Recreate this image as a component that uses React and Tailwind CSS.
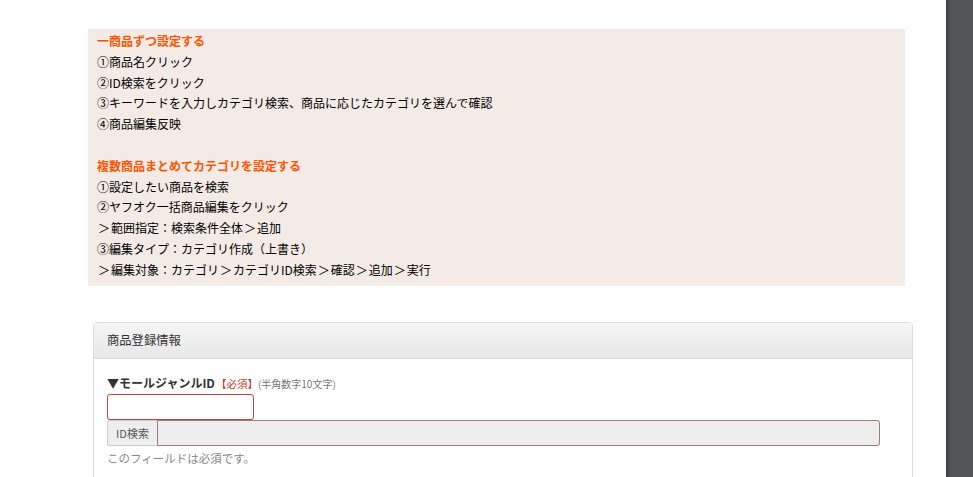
export default function App() {
  const jp = { fontFamily: '"Noto Sans CJK JP", "Noto Sans", sans-serif' };
  const G = () => <span className="inline-block w-[14px] text-center">＞</span>;
  return (
    <div className="flex h-[477px] w-[973px] overflow-hidden bg-white" style={jp}>
      <div className="w-[946px] shrink-0 pt-[29px]">
        <div className="ml-[88px] h-[257px] w-[817px] bg-[#f4ebe6] pl-[9px] pt-[2px] text-[12px] leading-[20.8px] text-[#000]">
          <div className="font-bold text-[#ff5400]">一商品ずつ設定する</div>
          <div>①商品名クリック</div>
          <div>②ID検索をクリック</div>
          <div>③キーワードを入力しカテゴリ検索、商品に応じたカテゴリを選んで確認</div>
          <div>④商品編集反映</div>
          <div>&nbsp;</div>
          <div className="font-bold text-[#ff5400]">複数商品まとめてカテゴリを設定する</div>
          <div>①設定したい商品を検索</div>
          <div>②ヤフオク一括商品編集をクリック</div>
          <div><G />範囲指定：検索条件全体<G />追加</div>
          <div>③編集タイプ：カテゴリ作成（上書き）</div>
          <div><G />編集対象：カテゴリ<G />カテゴリID検索<G />確認<G />追加<G />実行</div>
        </div>
        <div className="ml-[93px] mt-[36px] h-[200px] w-[820px] rounded-t-[4px] border border-[#dddddd]">
          <div className="flex h-[36px] items-center border-b border-[#dddddd] bg-gradient-to-b from-[#f5f5f5] to-[#e8e8e8] pl-[13px] text-[12.3px] text-[#333]">
            商品登録情報
          </div>
          <div className="pl-[13px] pt-[16px]">
            <div className="flex items-baseline text-[#333]">
              <span className="text-[12px] font-bold leading-[16px]">▼モールジャンルID</span>
              <span className="ml-[1px] text-[10.5px] text-[#c0392b]">【必須】</span>
              <span className="text-[10px] text-[#777]">(半角数字10文字)</span>
            </div>
            <div className="mt-[2px] h-[26px] w-[147px] rounded-[3px] border border-[#b94a48] bg-white"></div>
            <div className="flex h-[26px] w-[773px]">
              <div className="flex w-[50px] items-center justify-center rounded-l-[3px] border border-r-0 border-[#cccccc] bg-[#eeeeee] text-[11px] text-[#555]">
                ID検索
              </div>
              <div className="flex-1 rounded-r-[3px] border border-[#a07a78] bg-[#eeeeee]"></div>
            </div>
            <div className="mt-[4px] text-[11.5px] leading-[16px] text-[#888]">このフィールドは必須です。</div>
          </div>
        </div>
      </div>
      <div className="w-[27px] shrink-0" style={{ backgroundImage: 'linear-gradient(to right, #3d4144 0px, #4f5356 4px, #53575a 6px, #53575a 100%)' }}></div>
    </div>
  );
}
